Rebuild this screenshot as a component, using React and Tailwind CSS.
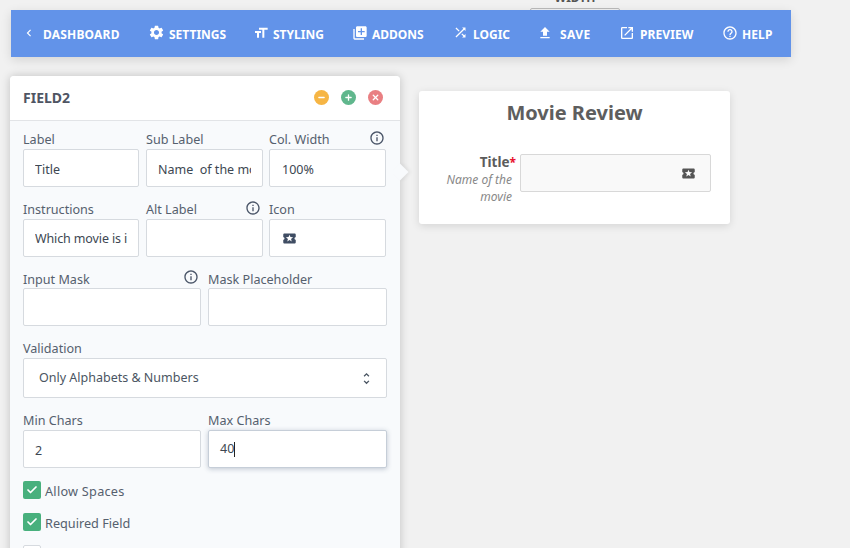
import React from "react";
import {
  MdChevronLeft, MdSettings, MdFormatSize, MdLibraryAdd, MdShuffle, MdFileUpload, MdOpenInNew,
  MdHelpOutline, MdInfoOutline, MdLocalActivity, MdUnfoldMore,
} from "react-icons/md";
import { Check as CheckIcon, Minus, Plus, X } from "lucide-react";

const nav = [
  { icon: MdChevronLeft, size: 14, label: "DASHBOARD", lw: 77, iw: 18, ox: -3, ls: 0.2 },
  { icon: MdSettings, size: 17, label: "SETTINGS", lw: 56, iw: 20, ox: -1.5, ls: 0 },
  { icon: MdFormatSize, size: 16, label: "STYLING", lw: 51, iw: 19, ox: -1.5, ls: 0 },
  { icon: MdLibraryAdd, size: 16, label: "ADDONS", lw: 53, iw: 19, ox: -1.5, ls: 0 },
  { icon: MdShuffle, size: 15, label: "LOGIC", lw: 36, iw: 19, ox: -1.5, ls: 0 },
  { icon: MdFileUpload, size: 16, label: "SAVE", lw: 31, iw: 22, ox: -1.5, ls: 0.4 },
  { icon: MdOpenInNew, size: 16, label: "PREVIEW", lw: 54, iw: 20, ox: -1, ls: 0.1 },
  { icon: MdHelpOutline, size: 16, label: "HELP", lw: 31, iw: 19, ox: -1.5, ls: 0.1 },
];

function Label({ children, info, infoClass = "mr-[1px]", textClass = "translate-y-[1px]" }) {
  return (
    <div className="flex h-[20px] items-center justify-between text-[12.6px] leading-none text-[#55606e]">
      <span className={textClass}>{children}</span>
      {info && <MdInfoOutline size={16} className={`-translate-y-[1px] text-[#4a5568] ${infoClass}`} />}
    </div>
  );
}

function Input({ value = "", className = "pt-[2px]" }) {
  return (
    <input
      readOnly
      value={value}
      className={`block h-[38px] w-full rounded-[2px] border border-[#d6dadf] bg-white px-[11px] text-[12.5px] text-[#3d4752] outline-none ${className}`}
    />
  );
}

function Check({ label, className = "" }) {
  return (
    <div className="mb-[14px] flex h-[18px] items-center gap-1 text-[12.7px] text-[#55606e]">
      <span className="flex h-[18px] w-[18px] items-center justify-center rounded-[2px] bg-[#48b07d]">
        <CheckIcon size={12} strokeWidth={3.5} className="text-white" />
      </span>
      <span className={`translate-y-[1.5px] ${className}`}>{label}</span>
    </div>
  );
}

function RoundBtn({ color, icon: Icon }) {
  return (
    <span className={`flex h-[15px] w-[15px] items-center justify-center rounded-full ${color}`}>
      <Icon size={9} strokeWidth={3.5} className="text-white" />
    </span>
  );
}

export default function App() {
  return (
    <div
      className="relative h-[548px] w-[850px] overflow-hidden bg-[#f1f1f1]"
      style={{ fontFamily: '"Noto Sans", sans-serif' }}
    >
      <div className="absolute left-[530px] top-[8px] h-[10px] w-[90px] rounded-[2px] border border-[#bbbbbb]" />
      <span className="absolute left-[530px] top-[-10px] w-[90px] text-center text-[12px] font-bold leading-[16px] text-[#555555]">WIDTH</span>

      <nav className="relative ml-[11px] flex h-[47px] w-[780px] translate-y-[10px] items-center gap-[29px] bg-[#6293e9] pl-[14px] text-white shadow-[0_3px_10px_rgba(0,0,0,0.12)]">
        {nav.map((n) => {
          const Icon = n.icon;
          return (
            <div key={n.label} className="flex items-center">
              <span className="flex h-[16px] items-center" style={{ width: n.iw }}>
                <Icon size={n.size} className="-translate-y-[1px] shrink-0" style={{ marginLeft: n.ox }} />
              </span>
              <span
                className="translate-y-[1px] whitespace-nowrap text-[12px] font-bold leading-none"
                style={{ width: n.lw, letterSpacing: n.ls }}
              >
                {n.label}
              </span>
            </div>
          );
        })}
      </nav>

      <div className="mt-[29px] flex items-start">
        <section className="relative ml-[10px] w-[390px] shrink-0 rounded-t-[4px] bg-[#f8fafc] shadow-[0_0_10px_rgba(0,0,0,0.2)]">
          <span className="absolute left-[384px] top-[90px] h-[12px] w-[12px] rotate-45 bg-[#f8fafc] shadow-[2px_-2px_4px_rgba(0,0,0,0.06)]" />
          <header className="flex h-[45px] items-center justify-between rounded-t-[4px] border-b border-[#e2e4e7] bg-white px-[13px] pb-[1px]">
            <h2 className="text-[14px] font-bold text-[#4f5563]">FIELD2</h2>
            <div className="mr-[4px] flex gap-[12px]">
              <RoundBtn color="bg-[#f6b544]" icon={Minus} />
              <RoundBtn color="bg-[#60b78d]" icon={Plus} />
              <RoundBtn color="bg-[#e97f82]" icon={X} />
            </div>
          </header>

          <div className="relative px-[13px] pt-[8px]">
            <div className="mb-[12px] flex">
              <div className="mr-[7px] w-[116px]">
                <Label>Label</Label>
                <Input value="Title" />
              </div>
              <div className="mr-[6px] w-[117px]">
                <Label>Sub Label</Label>
                <Input value="Name  of the movie" />
              </div>
              <div className="w-[117px]">
                <Label info>Col. Width</Label>
                <Input value="100%" className="pl-[12px] pt-[2px]" />
              </div>
            </div>

            <div className="mb-[11px] flex">
              <div className="mr-[7px] w-[116px]">
                <Label>Instructions</Label>
                <Input value="Which movie is it?" className="tracking-[-0.01em]" />
              </div>
              <div className="mr-[6px] w-[117px]">
                <Label info infoClass="mr-[2px]">Alt Label</Label>
                <Input />
              </div>
              <div className="w-[117px]">
                <Label>Icon</Label>
                <div className="flex h-[38px] items-center rounded-[2px] border border-[#d6dadf] bg-white pl-[12px]">
                  <MdLocalActivity size={15} className="text-[#3f4d63]" />
                </div>
              </div>
            </div>

            <div className="mb-[12px] flex gap-[7px]">
              <div className="w-[178px]">
                <Label info infoClass="mr-[2px]" textClass="translate-y-[2px]">Input Mask</Label>
                <Input />
              </div>
              <div className="w-[179px]">
                <Label textClass="translate-y-[2px]">Mask Placeholder</Label>
                <Input />
              </div>
            </div>

            <div className="mb-[12px]">
              <Label>Validation</Label>
              <div className="flex h-[40px] items-center justify-between rounded-[2px] border border-[#d6dadf] bg-white pl-[15px] pr-[12px] pt-[1px] text-[12.5px] text-[#4a5562]">
                <span>Only Alphabets &amp; Numbers</span>
                <MdUnfoldMore size={15} className="text-[#4a5562]" />
              </div>
            </div>

            <div className="mb-[13px] flex gap-[7px]">
              <div className="w-[178px]">
                <Label>Min Chars</Label>
                <Input value="2" />
              </div>
              <div className="w-[179px]">
                <Label>Max Chars</Label>
                <div className="flex h-[38px] items-center rounded-[2px] border border-[#c6ced8] bg-white px-[11px] pt-[1px] text-[12.5px] text-[#3d4752] shadow-[0_1px_5px_rgba(60,80,110,0.3)]">
                  40<span className="h-[15px] w-px bg-[#222222]" />
                </div>
              </div>
            </div>

            <Check label="Allow Spaces" className="tracking-[0.02em]" />
            <Check label="Required Field" />
            <div className="h-[18px] w-[18px] rounded-[2px] border border-[#d6dadf] bg-white" />
            <div className="h-[20px]" />
          </div>
        </section>

        <section className="ml-[19px] mt-[15px] h-[133px] w-[311px] rounded-[3px] bg-white shadow-[0_2px_8px_rgba(0,0,0,0.12)]">
          <h1 className="pt-[8px] text-center text-[20px] font-bold leading-[28px] text-[#5e5e5e]">Movie Review</h1>
          <div className="mt-[27px] flex">
            <div className="w-[101px] shrink-0 pl-[20px] pr-[4px] text-right">
              <div className="text-[13.5px] font-bold leading-[17px] text-[#5c5c5c]">
                Title<span className="text-[12px] text-[#e8112d]">*</span>
              </div>
              <div className="pr-[4px] text-[12px] italic leading-[17px] text-[#888888]">Name of the movie</div>
            </div>
            <div className="flex h-[38px] w-[191px] items-center justify-end rounded-[2px] border border-[#d8d8d8] bg-[#f9f9f9] pr-[14px]">
              <MdLocalActivity size={15} className="text-[#555555]" />
            </div>
          </div>
        </section>
      </div>
    </div>
  );
}
